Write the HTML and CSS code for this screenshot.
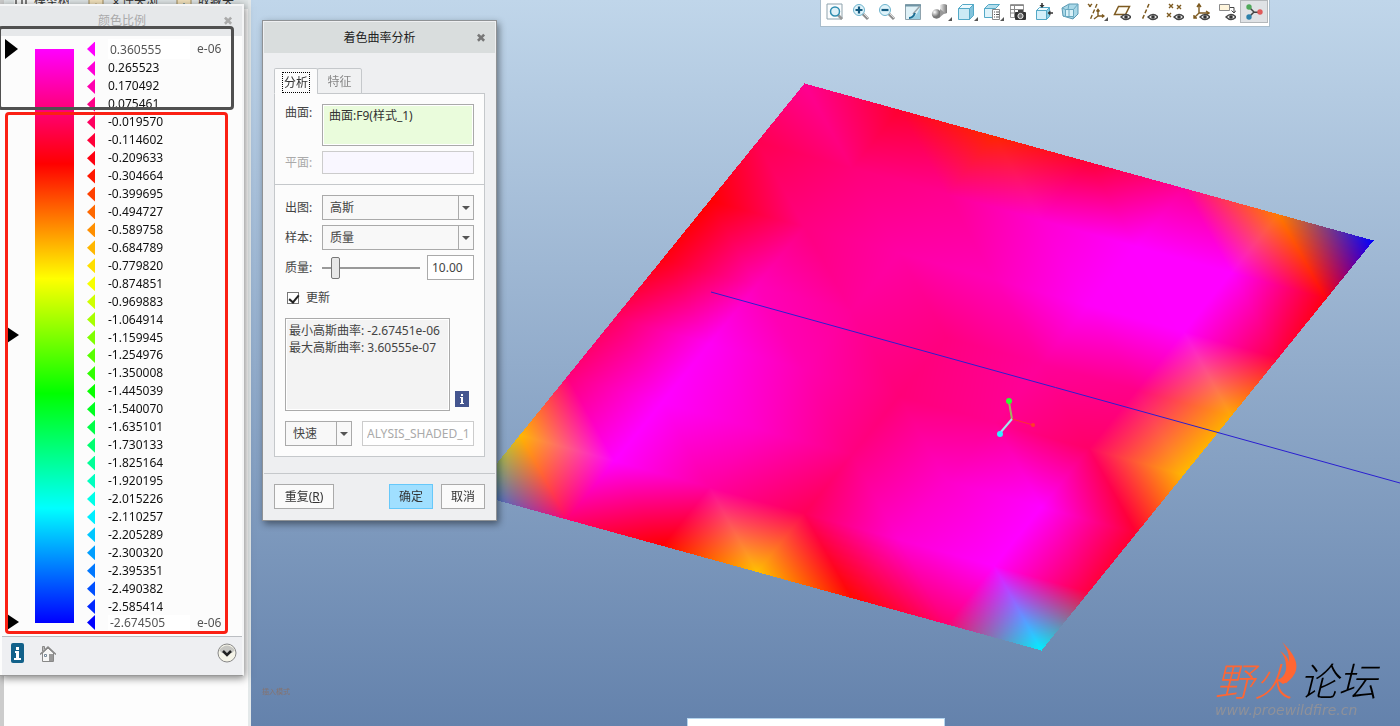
FILE: index.html
```html
<!DOCTYPE html>
<html lang="zh-CN">
<head>
  <meta charset="UTF-8">
  <title>着色曲率分析</title>
  <link rel="stylesheet" href="styles.css">
</head>
<body>

  <aside class="sidebar">
    <div class="side-tabs">
      <span class="side-tab current"><svg width="14" height="14" viewBox="0 0 14 14"><path d="M2 0v11M1 11h5M8 5v6M12 5v6M8 11h5" fill="none" stroke="#555" stroke-width="1.5"/></svg>模型树</span>
      <span class="side-tab"><svg width="16" height="14" viewBox="0 0 16 14"><rect x="1" y="2" width="14" height="14" fill="#f3e2bd" stroke="#a08a5a"/><circle cx="8" cy="12" r="3" fill="#fff" stroke="#a08a5a"/></svg>文件夹浏</span>
      <span class="side-tab"><svg width="16" height="14" viewBox="0 0 16 14"><rect x="1" y="2" width="14" height="14" fill="#f3e2bd" stroke="#a08a5a"/><path d="M8 8v6M5 11h6" stroke="#28698a"/></svg>收藏夹</span>
    </div>
  </aside>

  <main class="viewport">
    <canvas class="surface" id="surface" width="1149" height="726"></canvas>

    <div class="toolbar">
      <button class="tool" aria-label="重新调整"><svg viewBox="0 0 18 18"><path d="M1 1h15v15H1z" fill="#fbfdfe" stroke="#8fa3ad"/><path d="M12 12l4 4" stroke="#999" stroke-width="2.6"/><circle cx="9" cy="8.500" r="4.500" fill="#dff1f8" stroke="#2f8db0" stroke-width="1.500"/></svg></button>
      <button class="tool" aria-label="放大"><svg viewBox="0 0 18 18"><path d="M10.500 10.500l5.500 5.500" stroke="#8d8d8d" stroke-width="3"/><path d="M11 10l5 5" stroke="#ddd"/><circle cx="7" cy="7" r="5.500" fill="#dff3fa" stroke="#6cb3cd"/><path d="M7 3.500v7M3.500 7h7" stroke="#145b80" stroke-width="2.200"/></svg></button>
      <button class="tool" aria-label="缩小"><svg viewBox="0 0 18 18"><path d="M10.500 10.500l5.500 5.500" stroke="#8d8d8d" stroke-width="3"/><path d="M11 10l5 5" stroke="#ddd"/><circle cx="7" cy="7" r="5.500" fill="#dff3fa" stroke="#6cb3cd"/><path d="M3.500 7h7" stroke="#145b80" stroke-width="2.200"/></svg></button>
      <button class="tool" aria-label="重画"><svg viewBox="0 0 18 18"><path d="M1.500 1.500h15v15h-15z" fill="#dff1f7" stroke="#8fa3ad"/><path d="M1 2.500h16" stroke="#6f94a5" stroke-width="2"/><path d="M16 4v12H6c5-2 8-6 10-12z" fill="#99cfe2"/><path d="M16 3L9 11" stroke="#9aa6ac" stroke-width="1.500"/><path d="M5 15q4 0 6-5" fill="none" stroke="#176d94" stroke-width="2"/></svg></button>
      <button class="tool more" aria-label="渲染选项"><svg viewBox="0 0 18 18"><defs><radialGradient id="ball" cx=".3" cy=".3"><stop offset="0" stop-color="#fff"/><stop offset="1" stop-color="#777"/></radialGradient><linearGradient id="cyl"><stop offset="0" stop-color="#eee"/><stop offset="1" stop-color="#777"/></linearGradient></defs><path d="M9 2q4-2 7 0v8q-4 2-7 0z" fill="url(#cyl)"/><circle cx="5.500" cy="11" r="4.700" fill="url(#ball)"/><path d="M9 6l5 4-5 4z" fill="#999"/></svg></button>
      <button class="tool more" aria-label="显示样式"><svg viewBox="0 0 18 18"><path d="M1.500 5.500h11v11h-11z" fill="#cbeaf5" stroke="#54a9c7"/><path d="M1.500 5.500l4-4h11l-4 4z" fill="#edfaff" stroke="#54a9c7"/><path d="M12.500 5.500l4-4v11l-4 4z" fill="#82c3dc" stroke="#54a9c7"/></svg></button>
      <button class="tool more" aria-label="已保存方向"><svg viewBox="0 0 18 18"><path d="M1.500 5.500h11v9h-11z" fill="#dff3fa" stroke="#54a9c7"/><path d="M1.500 5.500l4-4h11l-4 4z" fill="#b5deec" stroke="#54a9c7"/><path d="M9.500 6.500h7v10h-7z" fill="#fff" stroke="#888"/><path d="M11 9h1M11 11.500h1M11 14h1M13 9h3M13 11.500h3M13 14h3" stroke="#555"/></svg></button>
      <button class="tool" aria-label="视图管理器"><svg viewBox="0 0 18 18"><path d="M1.500 1.500h13v13h-13z" fill="#fff" stroke="#999"/><path d="M1 2.500h14M5.500 2v13M1 6.500h14M1 10h14" stroke="#888"/><rect x="6" y="9" width="11" height="8" rx="1" fill="#333"/><path d="M9 7h5v3H9z" fill="#444"/><circle cx="11.500" cy="13" r="2.600" fill="#777" stroke="#eee"/></svg></button>
      <button class="tool" aria-label="透视图"><svg viewBox="0 0 18 18"><path d="M1.500 7.500h10v9h-10z" fill="#d5f0fa" stroke="#54a9c7"/><path d="M1.500 7.500l3-3h10l-3 3z" fill="#effbff" stroke="#54a9c7"/><path d="M11.500 7.500l3-3v9l-3 3z" fill="#8bcce3" stroke="#54a9c7"/><path d="M7 0v3M18 10h-3" stroke="#333" stroke-width="1.500"/><path d="M4.500 2h5L7 5zM15.500 7.500v5l-3-2.500z" fill="#333"/></svg></button>
      <button class="tool" aria-label="外观"><svg viewBox="0 0 18 18"><path d="M1 5l7-4 9 0v10l-5 5-10-3z" fill="#a9d8e8" stroke="#5998b2"/><path d="M4.500 6.500h8v7h-8z" fill="#d9f1f8" stroke="#68a8c0"/><path d="M1 5l3.500 1.500M8 1L7 6.500M17 1l-4.500 5.500M12.500 13.500l-.500 2.500M4.500 13.500L2 13M8 7v6" stroke="#68a8c0"/></svg></button>
      <button class="tool more" aria-label="基准显示过滤器"><svg viewBox="0 0 18 18"><g fill="none" stroke="#7d5a20" stroke-width="1.400"><path d="M1 1l4 4M5 1L1 5M10 1L3 17" stroke-dasharray="4 2"/><path d="M11 7v6h5M11 13l-4 3M9.500 8.500L11 6.500l1.500 2M15 11.500l2 1.500-2 1.500"/></g></svg></button>
      <button class="tool" aria-label="平面显示"><svg viewBox="0 0 18 18"><path d="M5.500 3.500h11l-4 8h-11z" fill="#fffdf5" stroke="#7d5a20" stroke-width="1.500"/><g class="eye"><path d="M8 14q5-5 10 0-5 5-10 0z"/><circle cx="13" cy="14" r="1.800"/></g></svg></button>
      <button class="tool" aria-label="轴显示"><svg viewBox="0 0 18 18"><path d="M9 1L2 17" stroke="#7d5a20" stroke-width="1.500" stroke-dasharray="4 2"/><g class="eye"><path d="M8 14q5-5 10 0-5 5-10 0z"/><circle cx="13" cy="14" r="1.800"/></g></svg></button>
      <button class="tool" aria-label="点显示"><svg viewBox="0 0 18 18"><path d="M3 1l4 4M7 1L3 5M11 2l4 4M15 2l-4 4M1 10l4 4M5 10l-4 4" stroke="#7d5a20" stroke-width="1.400"/><g class="eye"><path d="M8 14q5-5 10 0-5 5-10 0z"/><circle cx="13" cy="14" r="1.800"/></g></svg></button>
      <button class="tool" aria-label="坐标系显示"><svg viewBox="0 0 18 18"><path d="M7 2v8h9M7 10l-5 5M5 4l2-3 2 3M14 8l3 2-3 2M2 12v3h3" fill="none" stroke="#7d5a20" stroke-width="1.400"/><g class="eye"><path d="M8 14q5-5 10 0-5 5-10 0z"/><circle cx="13" cy="14" r="1.800"/></g></svg></button>
      <button class="tool" aria-label="注释显示"><svg viewBox="0 0 18 18"><path d="M1.500 1.500h10v6h-10z" fill="#fff5dc" stroke="#8a8a8a"/><path d="M12 4.500h4v5M13.500 7.500L16 10l2-2.500" fill="none" stroke="#444"/><g class="eye"><path d="M8 14q5-5 10 0-5 5-10 0z"/><circle cx="13" cy="14" r="1.800"/></g></svg></button>
      <button class="tool pressed" aria-label="旋转中心"><svg viewBox="0 0 18 18"><path d="M4 4l5 5M9 9l6 .500M9 9l-5 5" stroke="#444" stroke-width="1.500"/><circle cx="4" cy="4" r="2.700" fill="#4fa85a"/><circle cx="15" cy="9" r="2.700" fill="#e05a5a"/><circle cx="4" cy="14" r="2.700" fill="#2c80aa"/></svg></button>
    </div>

    <div class="mode-hint">插入模式</div>
    <div class="status-box"></div>

    <div class="watermark">
      <div class="brand"><span class="brand-hot">野火</span><span class="brand-dark">论坛</span></div>
      <svg class="flame" viewBox="0 0 20 42"><path d="M5 0Q24 18 18 31Q14 39 6 42L0 38Q7 36 9 28Q10 16 3 9Q10 13 12 20Q13 10 5 0z" fill="#ff6633"/></svg>
      <div class="site">www.proewildfire.cn</div>
    </div>
  </main>

  <section class="scale-window">
    <header class="scale-title"><h2>颜色比例</h2><button class="close" aria-label="关闭">✖</button></header>
    <div class="scale-body">
      <div class="color-bar"></div>
      <div class="scale-rows">
        <label class="scale-end first"><i class="arrow"></i><input type="text" value="0.360555" aria-label="最大值"><span>e-06</span></label>
        <ul class="scale-list" id="scaleList"></ul>
        <label class="scale-end last"><i class="arrow"></i><input type="text" value="-2.674505" aria-label="最小值"><span>e-06</span></label>
      </div>
      <i class="marker top"></i>
      <i class="marker middle"></i>
      <i class="marker bottom"></i>
    </div>
    <footer class="scale-footer">
      <button class="icon-button" aria-label="信息"><svg width="13" height="20" viewBox="0 0 13 20"><rect width="13" height="20" rx="2" fill="#12618a"/><path d="M5 4h3v3H5zM4 8h4v7h2v2H3v-2h2v-5H4z" fill="#fff"/></svg></button>
      <button class="icon-button" aria-label="主页"><svg width="16" height="17" viewBox="0 0 16 17"><path d="M2.500 8v8.500h11V8L8 3z" fill="#f6f6f6" stroke="#888"/><path d="M2.500 6V1.500h2V4" fill="#bbb" stroke="#888"/><path d="M0 9.500L8 2l8 7.500" fill="none" stroke="#888" stroke-width="1.500"/><path d="M9 9h4v7H9z" fill="#999"/><path d="M4.500 9.500h2v2h-2z" fill="#fff" stroke="#789"/></svg></button>
      <button class="icon-button expand" aria-label="展开"><svg width="20" height="20" viewBox="0 0 20 20"><circle cx="10" cy="10" r="9" fill="#f5f4e8" stroke="#888"/><path d="M2 7Q10-2 18 7L15 10H5z" fill="#c6c6c2"/><path d="M6 8l4 4 4-4" fill="none" stroke="#222" stroke-width="2.500"/></svg></button>
    </footer>
  </section>

  <div class="note note-dark"></div>
  <div class="note note-red"></div>

  <form class="dialog">
    <header class="dialog-title"><h1>着色曲率分析</h1><button type="button" class="close" aria-label="关闭">✖</button></header>
    <div class="dialog-body">
      <div class="tabs">
        <button type="button" class="tab active"><span>分析</span></button>
        <button type="button" class="tab"><span>特征</span></button>
      </div>
      <div class="pane">
        <div class="group refs">
          <div class="row"><label for="surf">曲面:</label><textarea class="collector" id="surf">曲面:F9(样式_1)</textarea></div>
          <div class="row disabled"><label for="plane">平面:</label><input type="text" class="plane" id="plane" disabled></div>
        </div>
        <div class="group options">
          <div class="row"><label for="plot">出图:</label><span class="drop"><select id="plot"><option>高斯</option></select></span></div>
          <div class="row"><label for="sample">样本:</label><span class="drop"><select id="sample"><option>质量</option></select></span></div>
          <div class="row"><label for="quality">质量:</label><input type="range" id="quality" min="0" max="100" value="10"><input type="text" class="number" value="10.00" aria-label="质量值"></div>
          <label class="check"><input type="checkbox" checked>更新</label>
          <div class="result-row">
            <textarea class="results" readonly aria-label="结果">最小高斯曲率: -2.67451e-06
最大高斯曲率: 3.60555e-07</textarea>
            <button type="button" class="icon-button" aria-label="信息"><svg width="14" height="16" viewBox="0 0 14 16"><rect width="14" height="16" fill="#44558f"/><path d="M6 3h2v2H6zM5 6h3v6h1v1H5v-1h1V7H5z" fill="#fff"/></svg></button>
          </div>
          <div class="save-row">
            <span class="drop"><select aria-label="类型"><option>快速</option></select></span>
            <input type="text" class="name" value="ALYSIS_SHADED_1" aria-label="名称" disabled>
          </div>
        </div>
      </div>
    </div>
    <footer class="dialog-footer">
      <button type="button" class="btn wide">重复(<u>R</u>)</button>
      <button type="button" class="btn primary">确定</button>
      <button type="button" class="btn">取消</button>
    </footer>
  </form>

  <script src="script.js"></script>
</body>
</html>
```

FILE: styles.css
```css
* { box-sizing: border-box; }
body {
  margin: 0;
  height: 100vh;
  display: flex;
  overflow: hidden;
  position: relative;
  font: 12px/18px "Noto Sans", "Noto Sans CJK SC", sans-serif;
  color: #444;
}
button, input, select, textarea { font: inherit; color: inherit; margin: 0; border-radius: 0; outline: none; }
button { padding: 0; cursor: pointer; }
h1, h2 { margin: 0; font-size: 12px; font-weight: normal; }
svg { display: block; }

/* navigator behind the windows */
.sidebar { width: 251px; flex: none; background: #fdfdfd; border-left: 4px solid #ccc; border-right: 3px solid #e4e9ea; }
.side-tabs { display: flex; gap: 18px; height: 18px; margin-top: -9px; padding-left: 10px; background: #dfe5e6; color: #333; white-space: nowrap; }
.side-tab { display: flex; align-items: flex-end; gap: 6px; line-height: 16px; }
.side-tab.current { background: #f6f7f7; }

/* graphics area */
.viewport { flex: 1; position: relative; overflow: hidden; background: linear-gradient(#c0d6ea, #6482ac); }
.surface { position: absolute; left: 0; top: 0; }
.toolbar { position: absolute; top: 0; right: 130px; width: 450px; height: 27px; padding: 0 1px; display: flex; background: #fff; border: 1px solid #a9bdcc; border-top: 0; }
.tool { flex: 1; height: 23px; display: flex; align-items: center; justify-content: center; border: 0; background: none; position: relative; }
.tool svg { width: 18px; height: 18px; flex: none; }
.tool.pressed { background: #dfe2e5; border: 1px solid #b4b8bb; }
.tool.more::after { content: ""; position: absolute; right: 1px; bottom: 2px; border: 2px solid #555; border-left-color: transparent; border-top-color: transparent; }
.eye path { fill: #eee; stroke: #444; stroke-width: 1.4; }
.eye circle { fill: #333; }
.mode-hint { position: absolute; left: 11px; bottom: 29px; font-size: 7px; line-height: 10px; color: #85736f; }
.status-box { position: absolute; left: 436px; bottom: 0; width: 258px; height: 8px; background: #fff; border: 1px solid #b5d5ee; border-bottom: 0; }

.watermark { position: absolute; right: 18px; bottom: 8px; width: 167px; }
.brand { display: flex; gap: 6px; font: italic 300 39px/46px "Noto Sans CJK SC", sans-serif; }
.brand-hot { color: #ff6633; }
.brand-dark { color: #000; }
.site { font: italic 14px/16px "DejaVu Sans", sans-serif; color: #8f9199; }
.flame { position: absolute; left: 62px; top: -14px; width: 20px; height: 42px; }

/* colour scale window */
.scale-window { position: absolute; left: 0; top: 4px; width: 244px; border: 2px solid #f4f5f6; border-left: 0; border-bottom: 1px solid #999; background: #fcfcfc; box-shadow: 1px 2px 8px rgba(0, 0, 0, .5); }
.scale-title { height: 30px; padding-left: 2px; background: #e6e8ea; display: flex; align-items: center; justify-content: center; position: relative; color: #aaa; }
.close { position: absolute; right: 7px; width: 14px; border: 0; background: none; font: 12px/16px "DejaVu Sans", sans-serif; color: #777; }
.scale-title .close { color: #aaa; }
.scale-body { height: 600px; padding: 3px 0 0 35px; display: flex; gap: 13px; position: relative; }
.color-bar { width: 39px; height: 574px; margin-top: 10px; background: linear-gradient(#f0f, #f00, #ff0, #0f0, #0ff, #00f); }
.scale-rows { flex: 1; color: #111; }
.arrow { display: block; width: 8px; height: 15px; background: currentColor; clip-path: polygon(100% 0, 100% 100%, 0 50%); }
.scale-end { display: flex; align-items: center; color: #555; }
.scale-end.first { height: 20px; }
.scale-end.last { height: 15px; }
.scale-end input { width: 82px; height: 100%; margin: 0 7px 0 13px; padding: 0 2px; border: 0; background: #fff; }
.first .arrow { color: #f0f; }
.last .arrow { color: #00f; }
.scale-list { list-style: none; margin: 0; padding: 0; height: 556px; display: flex; flex-direction: column; }
.scale-list li { flex: 1; min-height: 0; padding-top: 1px; display: flex; align-items: center; gap: 13px; }
.marker { position: absolute; left: 7px; width: 12px; height: 16px; background: #000; clip-path: polygon(0 0, 100% 50%, 0 100%); }
.marker.top { top: 3px; left: 5px; width: 13px; height: 20px; }
.marker.middle { top: 291px; }
.marker.bottom { top: 578px; }
.scale-footer { height: 39px; margin-left: 2px; padding: 0 5px 6px 9px; display: flex; align-items: center; gap: 16px; background: #eeeff2; border-top: 1px solid #bbbec2; }
.icon-button { border: 0; background: none; }
.expand { margin-left: auto; }

/* mark-up boxes */
.note { position: absolute; border: 3px solid; border-radius: 4px; pointer-events: none; }
.note-dark { left: -2px; top: 26px; width: 236px; height: 84px; border-color: #505050; }
.note-red { left: 5px; top: 112px; width: 223px; height: 522px; border-color: #fb2014; }

/* analysis dialog */
.dialog { position: absolute; left: 262px; top: 20px; width: 235px; background: #eeeff1; border: 1px solid #8f9295; padding: 1px; box-shadow: 2px 3px 7px rgba(0, 0, 0, .45); }
.dialog-title { height: 31px; display: flex; align-items: center; justify-content: center; background: #d9dddd; color: #222; position: relative; }
.dialog-body { padding: 15px 10px 16px; }
.tabs { display: flex; height: 26px; margin-bottom: -1px; position: relative; }
.tab { width: 44px; padding-top: 2px; border: 1px solid #c5c8cb; background: #f0f1f2; color: #888; border-radius: 2px 2px 0 0; }
.tab + .tab { width: 45px; margin-left: -1px; }
.tab.active { background: #fcfcfc; border-bottom-color: #fcfcfc; color: #333; }
.tab.active span { display: inline-block; border: 1px dotted #000; padding: 0 1px; line-height: 19px; }
.pane { border: 1px solid #c5c8cb; background: #fcfcfc; }
.group { padding: 10px; display: flex; flex-direction: column; gap: 5px; }
.group + .group { border-top: 1px solid #c5c8cb; }
.row { display: flex; align-items: center; }
.row > label { width: 37px; flex: none; }
.refs .row:first-child { align-items: flex-start; }
.row.disabled { color: #aaa; }
.collector { flex: 1; min-width: 0; height: 42px; padding: 2px 6px; resize: none; overflow: hidden; border: 1px solid #aaa; box-shadow: inset 0 0 0 1px #fff; background: #eafcdc; color: #333; }
.plane { flex: 1; min-width: 0; height: 23px; border: 1px solid #ccc; background: #f9f7ff; }
.drop { flex: 1; position: relative; display: flex; }
.drop select { width: 100%; height: 25px; padding: 0 7px; appearance: none; border: 1px solid #aaa; background: #f8f8f8; }
.drop::after { content: ""; position: absolute; right: 4px; top: 11px; border: 4px solid transparent; border-top-color: #555; border-bottom: 0; pointer-events: none; }
.drop::before { content: ""; position: absolute; right: 15px; top: 0; height: 25px; border-left: 1px solid #aaa; pointer-events: none; }
#quality { appearance: none; width: 98px; height: 22px; background: linear-gradient(#999, #999) center / 100% 2px no-repeat; }
#quality::-webkit-slider-thumb { appearance: none; width: 9px; height: 22px; border: 1px solid #777; border-radius: 2px; background: #e8e8e8; }
.number { width: 47px; height: 25px; margin-left: auto; padding: 0 4px; border: 1px solid #aaa; background: #fff; }
.check { display: flex; align-items: center; gap: 7px; height: 25px; padding-left: 2px; }
.check input { appearance: none; width: 12px; height: 12px; border: 1px solid #777; background: #fff; position: relative; }
.check input:checked::after { content: ""; position: absolute; left: 3px; top: 0; width: 4px; height: 8px; border: solid #222; border-width: 0 2px 2px 0; transform: rotate(40deg); }
.result-row { display: flex; align-items: flex-end; gap: 5px; padding: 3px 0 5px; }
.result-row .icon-button { margin-bottom: 4px; }
.results { width: 165px; height: 93px; padding: 3px; line-height: 17px; resize: none; overflow: hidden; white-space: pre; border: 1px solid #aaa; background: #f3f3f3; box-shadow: inset 0 0 0 1px #fff; }
.save-row { display: flex; gap: 10px; }
.save-row .drop { flex: none; width: 67px; }
.name { flex: 1; min-width: 0; height: 25px; padding: 0 4px; border: 1px solid #ccc; background: #fff; color: #aaa; }
.dialog-footer { display: flex; gap: 8px; padding: 10px; border-top: 1px solid #c5c8cb; }
.btn { width: 44px; height: 25px; border: 1px solid #aaa; background: #fafafa; color: #333; }
.btn.wide { width: 60px; margin-right: auto; }
.btn.primary { background: #a0dfff; border-color: #66c8fa; }
```

FILE: script.js
```js
const scaleList = document.getElementById('scaleList');
const values = [
  '0.265523', '0.170492', '0.075461', '-0.019570', '-0.114602', '-0.209633', '-0.304664', '-0.399695',
  '-0.494727', '-0.589758', '-0.684789', '-0.779820', '-0.874851', '-0.969883', '-1.064914', '-1.159945',
  '-1.254976', '-1.350008', '-1.445039', '-1.540070', '-1.635101', '-1.730133', '-1.825164', '-1.920195',
  '-2.015226', '-2.110257', '-2.205289', '-2.300320', '-2.395351', '-2.490382', '-2.585414'
];

// rainbow runs magenta -> red -> green -> blue
values.forEach((value, i) => {
  const row = document.createElement('li');
  const arrow = document.createElement('i');
  arrow.className = 'arrow';
  arrow.style.color = `hsl(${300 + 300 * (i + 1) / (values.length + 1)}, 100%, 50%)`;
  row.append(arrow, value);
  scaleList.appendChild(row);
});

// curvature colours at the mesh nodes, 7 across and 8 down
const mesh = [
  ['ff0090', 'ff0030', 'ff2400', 'ff0038', 'ff0098', 'ff7a00', '0000ff'],
  ['ff0050', 'ff0078', 'ff0090', 'ff00d0', 'ff00ff', 'ff00ff', 'ff0010'],
  ['ff0000', 'ff0080', 'ff00a4', 'ff00b8', 'ff00f8', 'ff00ff', 'ff0040'],
  ['ff0010', 'ff00b8', 'ff0098', 'ff0080', 'ff009a', 'ff0088', 'ffaa00'],
  ['ff0060', 'ff00f4', 'ff00b0', 'ff0078', 'ff0090', 'ff0068', 'ffb800'],
  ['ff0078', 'ff00ff', 'ff00c8', 'ff0080', 'ff00c8', 'ff00ff', 'ff0030'],
  ['ffb800', 'ff00ff', 'ff00a0', 'ff0058', 'ff00d0', 'ff00ff', 'ff0040'],
  ['10a0d8', 'ff0070', 'ff0000', 'ffc000', 'ff0800', 'ff0070', '00f0ff']
].map(row => row.map(c => [0, 2, 4].map(k => parseInt(c.substr(k, 2), 16))));

const canvas = document.getElementById('surface');
const ctx = canvas.getContext('2d');
const origin = [553, 83];
const across = [569, 157];
const down = [-332, 410];
const det = across[0] * down[1] - across[1] * down[0];
const image = ctx.createImageData(canvas.width, canvas.height);

for (let y = 0; y < canvas.height; y++) {
  for (let x = 0; x < canvas.width; x++) {
    const dx = x - origin[0];
    const dy = y - origin[1];
    const u = (dx * down[1] - dy * down[0]) / det;
    const v = (dy * across[0] - dx * across[1]) / det;
    if (u < 0 || u > 1 || v < 0 || v > 1) continue;

    const i = Math.min(5, Math.floor(u * 6));
    const j = Math.min(6, Math.floor(v * 7));
    const s = u * 6 - i;
    const t = v * 7 - j;
    const a = mesh[j][i];
    const b = s > t ? mesh[j][i + 1] : mesh[j + 1][i];
    const c = mesh[j + 1][i + 1];
    const hi = Math.max(s, t);
    const lo = Math.min(s, t);
    const p = (y * canvas.width + x) * 4;
    for (let k = 0; k < 3; k++) {
      image.data[p + k] = a[k] * (1 - hi) + b[k] * (hi - lo) + c[k] * lo;
    }
    image.data[p + 3] = 255;
  }
}
ctx.putImageData(image, 0, 0);

function line(x1, y1, x2, y2, color, width) {
  ctx.strokeStyle = color;
  ctx.lineWidth = width;
  ctx.beginPath();
  ctx.moveTo(x1, y1);
  ctx.lineTo(x2, y2);
  ctx.stroke();
}

function dot(x, y, r, color) {
  ctx.fillStyle = color;
  ctx.beginPath();
  ctx.arc(x, y, r, 0, Math.PI * 2);
  ctx.fill();
}

line(460, 292, 1149, 483, '#2a1fd0', 1);

// spin centre
line(761, 419, 758, 402, '#a0b060', 2);
line(761, 419, 782, 425, '#ff3030', 1);
line(761, 419, 749, 433, '#a0e8f0', 2);
dot(758, 401, 3, '#30f830');
dot(782, 425, 2, '#ff3a28');
dot(749, 434, 3, '#30f0ff');
```
